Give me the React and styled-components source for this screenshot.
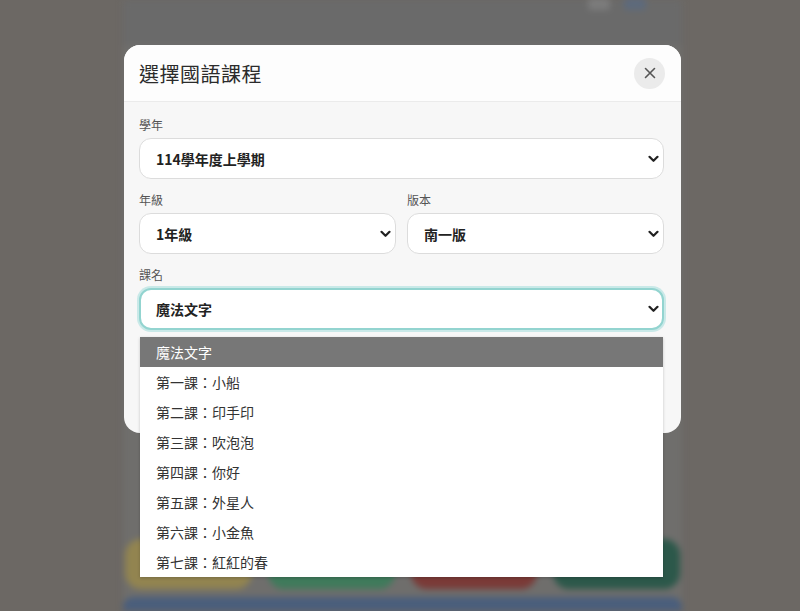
import React, { useState } from "react";
import styled, { createGlobalStyle } from "styled-components";

const lessons = [
  "魔法文字",
  "第一課：小船",
  "第二課：印手印",
  "第三課：吹泡泡",
  "第四課：你好",
  "第五課：外星人",
  "第六課：小金魚",
  "第七課：紅紅的春",
];

const Chevron = () => (
  <svg width="11" height="8" viewBox="0 0 11 8">
    <path
      d="M1.5 1.8 L5.5 5.8 L9.5 1.8"
      fill="none"
      stroke="#222"
      strokeWidth="2.2"
      strokeLinecap="round"
      strokeLinejoin="round"
    />
  </svg>
);

const App = () => {
  const [lesson, setLesson] = useState(0);

  return (
    <>
      <GlobalStyle />
      <Page>
        <AppColumn>
          <TopBar>
            <TopIcon />
            <TopIcon $blue />
          </TopBar>
          <Spacer />
          <PillRow>
            <Pill $color="#928450" />
            <Pill $color="#3f7a5b" />
            <Pill $color="#7a3a37" />
            <Pill $color="#2c584a" />
          </PillRow>
          <BlueBar />
        </AppColumn>

        <Modal>
          <Header>
            <Title>選擇國語課程</Title>
            <CloseButton aria-label="close">
              <svg width="12" height="12" viewBox="0 0 12 12">
                <path
                  d="M1.5 1.5 L10.5 10.5 M10.5 1.5 L1.5 10.5"
                  stroke="#555"
                  strokeWidth="1.6"
                  strokeLinecap="round"
                />
              </svg>
            </CloseButton>
          </Header>
          <Body>
            <Field>
              <Label>學年</Label>
              <Select>
                <SelectText>114學年度上學期</SelectText>
                <Chevron />
              </Select>
            </Field>
            <Row>
              <Field>
                <Label>年級</Label>
                <Select>
                  <SelectText>1年級</SelectText>
                  <Chevron />
                </Select>
              </Field>
              <Field>
                <Label>版本</Label>
                <Select>
                  <SelectText>南一版</SelectText>
                  <Chevron />
                </Select>
              </Field>
            </Row>
            <Field>
              <Label>課名</Label>
              <Select $focused>
                <SelectText>{lessons[lesson]}</SelectText>
                <Chevron />
              </Select>
            </Field>
          </Body>
        </Modal>

        <Dropdown>
          {lessons.map((name, i) => (
            <Option
              key={name}
              $active={i === lesson}
              onClick={() => setLesson(i)}
            >
              {name}
            </Option>
          ))}
        </Dropdown>
      </Page>
    </>
  );
};
export default App;

const GlobalStyle = createGlobalStyle`
  html, body {
    margin: 0;
    padding: 0;
  }
  body {
    font-family: "Noto Sans CJK TC", "Noto Sans", sans-serif;
    background: #6c6864;
  }
`;

const Page = styled.div`
  position: relative;
  width: 800px;
  height: 611px;
  overflow: hidden;
  background: #6c6864;
  display: flex;
  justify-content: center;
`;

const AppColumn = styled.div`
  width: 559px;
  margin-left: 5px;
  height: 100%;
  background: #6f6e6c;
  display: flex;
  flex-direction: column;
  filter: blur(3px);
`;

const TopBar = styled.div`
  height: 45px;
  display: flex;
  justify-content: flex-end;
  align-items: flex-start;
  gap: 14px;
  padding: 0 36px 0 0;
  background: #6a6a6a;
`;

const TopIcon = styled.div`
  width: 22px;
  height: 12px;
  margin-top: -2px;
  border-radius: 4px;
  background: ${(props) => (props.$blue ? "#5d6a7c" : "#7c7c7c")};
`;

const Spacer = styled.div`
  flex: 1;
`;

const PillRow = styled.div`
  display: flex;
  gap: 16px;
  padding: 0 2px;
  height: 50px;
`;

const Pill = styled.div`
  flex: 1;
  border-radius: 16px;
  background: ${(props) => props.$color};
`;

const BlueBar = styled.div`
  height: 14px;
  margin-top: 8px;
  border-radius: 10px 10px 0 0;
  background: #4a5e7c;
`;

const Modal = styled.div`
  position: absolute;
  top: 45px;
  left: 124px;
  width: 557px;
  height: 388px;
  background: #f7f7f7;
  border-radius: 16px;
  overflow: hidden;
  display: flex;
  flex-direction: column;
`;

const Header = styled.div`
  height: 56px;
  padding: 0 16px 0 15px;
  display: flex;
  align-items: center;
  justify-content: space-between;
  background: #fdfdfd;
  border-bottom: 1px solid #ebebeb;
`;

const Title = styled.h2`
  margin: 0;
  font-size: 20px;
  font-weight: 400;
  color: #2b2b2b;
  letter-spacing: 0.5px;
`;

const CloseButton = styled.button`
  width: 31px;
  height: 31px;
  border: none;
  border-radius: 50%;
  background: #ebebeb;
  display: flex;
  align-items: center;
  justify-content: center;
  padding: 0;
  cursor: pointer;
`;

const Body = styled.div`
  padding: 14px 17px 0 15px;
  display: flex;
  flex-direction: column;
  gap: 12px;
`;

const Row = styled.div`
  display: grid;
  grid-template-columns: 1fr 1fr;
  gap: 11px;
`;

const Field = styled.div`
  display: flex;
  flex-direction: column;
  gap: 4px;
`;

const Label = styled.label`
  font-size: 12px;
  color: #555;
  line-height: 18px;
`;

const Select = styled.div`
  height: ${(props) => (props.$focused ? "42px" : "41px")};
  box-sizing: border-box;
  border-radius: 12px;
  background: #fff;
  border: ${(props) =>
    props.$focused ? "2px solid #93d4d0" : "1px solid #dcdcdc"};
  box-shadow: ${(props) =>
    props.$focused ? "0 0 0 2px rgba(170, 224, 221, 0.6)" : "none"};
  display: flex;
  align-items: center;
  justify-content: space-between;
  padding: ${(props) => (props.$focused ? "0 3px 0 15px" : "0 4px 0 16px")};
`;

const SelectText = styled.span`
  font-size: 14px;
  font-weight: 700;
  color: #222;
`;

const Dropdown = styled.ul`
  position: absolute;
  top: 337px;
  left: 140px;
  width: 523px;
  margin: 0;
  padding: 0;
  list-style: none;
  background: #fff;
  box-shadow: 0 1px 3px rgba(0, 0, 0, 0.2);
`;

const Option = styled.li`
  height: 30px;
  display: flex;
  align-items: center;
  padding-left: 16px;
  font-size: 14px;
  color: ${(props) => (props.$active ? "#fff" : "#333")};
  background: ${(props) => (props.$active ? "#777" : "transparent")};
  cursor: default;
`;
